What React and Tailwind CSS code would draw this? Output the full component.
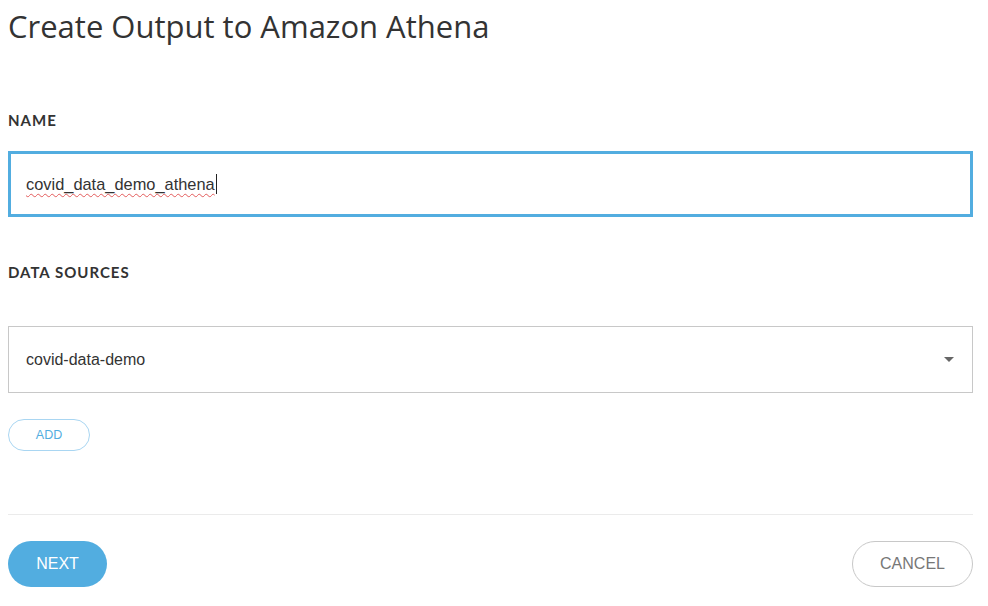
export default function App() {
  return (
    <div className="w-[988px] h-[606px] bg-white overflow-hidden font-['Liberation_Sans',Arial,sans-serif]">
      <div className="pl-[8px] pr-[15px]">
        <h1 className="pt-[6px] text-[31px] leading-[40px] text-[#333] font-normal font-['Open_Sans',sans-serif]">
          Create Output to Amazon Athena
        </h1>
        <div className="mt-[64px] text-[15px] leading-[20px] font-bold tracking-[1px] text-[#333] font-['Lato',sans-serif]">
          NAME
        </div>
        <div className="mt-[21px] h-[66px] border-[3px] border-[#52ade0] flex items-center pl-[15px]">
          <span className="text-[16.4px] text-[#333] underline decoration-wavy decoration-[#e35b5b] decoration-1 underline-offset-[3px]">
            covid_data_demo_athena
          </span>
          <span className="w-px h-[20px] bg-[#222] ml-px"></span>
        </div>
        <div className="mt-[45px] text-[15px] leading-[20px] font-bold tracking-[1px] text-[#333] font-['Lato',sans-serif]">
          DATA SOURCES
        </div>
        <div className="mt-[44px] h-[67px] border border-[#c8c8c8] flex items-center justify-between pl-[17px] pr-[18px]">
          <span className="text-[16px] text-[#333]">covid-data-demo</span>
          <svg width="10" height="6" viewBox="0 0 10 6"><path d="M0 0 L10 0 L5 5 Z" fill="#666" /></svg>
        </div>
        <button className="mt-[26px] w-[82px] h-[32px] rounded-full border border-[#a9d6f2] text-[12.5px] text-[#52ade0] flex items-center justify-center">
          ADD
        </button>
        <div className="mt-[63px] h-px bg-[#ebebeb]"></div>
        <div className="mt-[26px] flex justify-between">
          <button className="w-[99px] h-[46px] rounded-full bg-[#52ade0] text-white text-[16px] flex items-center justify-center">
            NEXT
          </button>
          <button className="w-[121px] h-[46px] rounded-full border border-[#c8c8c8] text-[#777] text-[16px] flex items-center justify-center">
            CANCEL
          </button>
        </div>
      </div>
    </div>
  );
}
